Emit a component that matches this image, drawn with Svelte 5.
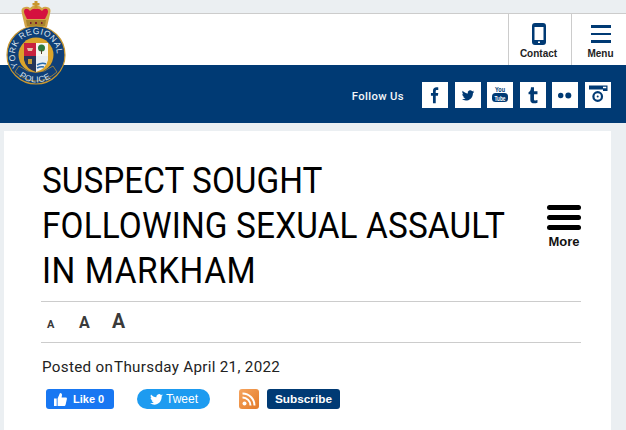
<script>
  const socials = ['f', 't', 'y', 'u', 'fl', 'i'];
</script>

<div class="page">
  <header class="top">
    <svg class="logo" width="72" height="88" viewBox="0 0 72 88" aria-label="York Regional Police">
      <defs>
        <path id="arcTop" d="M18.500 66.600 A21 21 0 1 1 53.500 66.600" />
        <path id="arcBottom" d="M18.500 76 A27 27 0 0 0 53.500 76" />
      </defs>
      <path d="M36 27 H25 L22 14 q-2-6 3-7 q3-1 5 1 q3-3 6-2 q3-1 6 2 q2-2 5-1 q5 1 3 7 L47 27z" fill="#d3a548" />
      <path d="M25 9 q3-1 5 2 q3-3 6-2 q3-1 6 2 q2-3 5-2 q2 2 0 6 l-2 4 H27 l-2-4 q-2-4 0-6z" fill="#d5103f" />
      <path d="M26 20 H46 L45 26 H27z" fill="#a8842c" />
      <path d="M30 22 h1.500 v2 h-1.500z M35 22 h2 v2 h-2z M41 22 h1.500 v2 h-1.500z" fill="#7a1f2c" />
      <path d="M34.500 1 h3 v2 h2 v2.500 h-2 v3 h-3 v-3 h-2 V3 h2z" fill="#c9962f" />
      <circle cx="36" cy="55" r="29" fill="#0f3f78" stroke="#c9972f" stroke-width="1.200" />
      <circle cx="36" cy="55" r="17.500" fill="#dba42b" />
      <text class="seal"><textPath href="#arcTop" startOffset="0">YORK REGIONAL</textPath></text>
      <path d="M15 72 Q36 90 57 72 L53 66 Q36 79 19 66z" fill="#0f3f78" stroke="#c9972f" stroke-width=".7" />
      <text class="seal"><textPath href="#arcBottom" startOffset="2%">POLICE</textPath></text>
      <path d="M24 43 H36 V56 H24z" fill="#c9223f" />
      <path d="M36 43 H48 V56 H36z" fill="#f6f6f2" />
      <path d="M24 56 H36 V72 Q26 69 24 60z" fill="#25365a" />
      <path d="M36 56 H48 V60 Q46 69 36 72z" fill="#e9eef3" />
      <path d="M37 65 q5-3 9-1 M37 68 q4-2 7-1" stroke="#2a6aa8" stroke-width="1.500" fill="none" />
      <circle cx="41.500" cy="48" r="3.500" fill="#2f7a3c" />
      <path d="M41 50 h1 v4 h-1z" fill="#54402a" />
      <path d="M27 48 h6 l-1 3 h-4z" fill="#e2c4a8" />
      <path d="M28 59 h4 v5 h-4z" fill="#c49b33" />
    </svg>
    <div class="spacer"></div>
    <div class="tool contact">
      <svg width="14" height="22" viewBox="0 0 14 22"><path fill-rule="evenodd" d="M3 0h8a3 3 0 0 1 3 3v16a3 3 0 0 1-3 3H3a3 3 0 0 1-3-3V3a3 3 0 0 1 3-3zM2.500 4v13h9V4zM6 18.500v1.500h2v-1.500z" fill="#003a74" /></svg>
      <span>Contact</span>
    </div>
    <div class="tool menu">
      <div class="burger"><i></i><i></i><i></i></div>
      <span>Menu</span>
    </div>
  </header>

  <div class="band">
    <span class="follow">Follow Us</span>
    <div class="socials">
      {#each socials as s}
        <div class="social">
          {#if s === 'f'}
            <svg width="26" height="26" viewBox="-3 -3 32 32"><path d="M10.500 23V14H8v-3.500h2.500V8c0-3 1.700-4.500 4.300-4.500 1 0 2 .1 2.200.2v3h-1.600c-1.300 0-1.500.7-1.500 1.600v2.200H17l-.4 3.500h-2.700v9z" fill="#003a74" /></svg>
          {:else if s === 't'}
            <svg width="26" height="26" viewBox="-8 -8 42 42"><path d="M23 7.500c-.8.400-1.500.5-2.400.6.900-.5 1.500-1.300 1.800-2.200-.8.500-1.700.8-2.600 1a4 4 0 0 0-7 3.700C9.300 10.400 6.300 8.800 4.300 6.300c-1 1.900-.5 4.200 1.300 5.400-.7 0-1.300-.2-1.900-.5 0 2 1.400 3.700 3.300 4.100-.6.200-1.200.2-1.800.1.500 1.600 2 2.800 3.800 2.800-1.800 1.400-4 2-6 1.800 6.500 4.100 17.800 1.500 18-10 .8-.6 1.500-1.300 2-2.500z" fill="#003a74" /></svg>
          {:else if s === 'y'}
            <svg width="26" height="26" viewBox="0 0 26 26"><text x="13" y="10" text-anchor="middle" class="you" textLength="10" lengthAdjust="spacingAndGlyphs">You</text><rect x="5" y="11" width="16" height="9" rx="3.500" fill="#003a74" /><text x="13" y="18.500" text-anchor="middle" class="tube" textLength="11" lengthAdjust="spacingAndGlyphs">Tube</text></svg>
          {:else if s === 'u'}
            <svg width="26" height="26" viewBox="-3 -3 32 32"><path d="M10.500 3.500h3.700v5h4.300v3.700h-4.300v6c0 1.700 1.500 1.900 4.300 1v3.300c-1.300.6-2.700.8-4 .8-3 0-4.800-1.500-4.800-4.300v-6.800H7.500V9.500c2-.6 2.900-3 3-6z" fill="#003a74" /></svg>
          {:else if s === 'fl'}
            <svg width="26" height="26" viewBox="0 0 26 26"><circle cx="8.700" cy="13.500" r="2.700" fill="#003a74" /><circle cx="16.300" cy="13.500" r="3" fill="#003a74" /></svg>
          {:else}
            <svg width="26" height="26" viewBox="0 0 26 26"><path fill-rule="evenodd" d="M4 3.500h18.500v5.500H18V7.500H4zM18 4.700v1.600h3.300V4.700z" fill="#003a74" /><circle cx="12.700" cy="14.500" r="4.300" fill="none" stroke="#003a74" stroke-width="2.200" /><circle cx="12.700" cy="14.500" r="1" fill="#003a74" /></svg>
          {/if}
        </div>
      {/each}
    </div>
  </div>

  <main class="card">
    <div class="titlerow">
      <h1>SUSPECT SOUGHT<br /><span class="l2">FOLLOWING SEXUAL ASSAULT</span><br /><span class="l3">IN MARKHAM</span></h1>
      <div class="more">
        <div class="fat"><i></i><i></i><i></i></div>
        <span>More</span>
      </div>
    </div>
    <div class="sizes">
      <span class="s1">A</span><span class="s2">A</span><span class="s3">A</span>
    </div>
    <p class="posted">Posted on<span>Thursday April 21, 2022</span></p>
    <div class="share">
      <div class="like">
        <svg width="13" height="13" viewBox="0 0 13 13"><path d="M0 5.500h2.700V13H0zM3.600 5.500 6 0c1.300 0 2 .9 2 2l-.4 2.500h4c1 0 1.500.8 1.300 1.600l-1.300 5.700c-.2.800-.8 1.200-1.500 1.200H3.600z" fill="#fff" /></svg>
        <span>Like 0</span>
      </div>
      <div class="tweet">
        <svg width="13" height="11" viewBox="0 0 26 22"><path d="M26 2.600c-1 .4-2 .7-3 .8 1.100-.7 1.900-1.700 2.300-2.900-1 .6-2.200 1-3.400 1.300a5.300 5.300 0 0 0-9 4.800C8.500 6.400 4.600 4.300 2 1.100.5 3.500 1.300 6.600 3.600 8.100c-.9 0-1.700-.3-2.400-.7 0 2.600 1.800 4.800 4.300 5.300-.8.200-1.600.2-2.400.1.700 2.100 2.600 3.600 4.900 3.700-2.200 1.700-5.100 2.500-8 2.100 11 7 23.800 0 23.400-14 1-.6 1.900-1.200 2.600-2z" fill="#fff" /></svg>
        <span>Tweet</span>
      </div>
      <div class="rss">
        <svg width="14" height="14" viewBox="0 0 14 14"><circle cx="2.500" cy="11.500" r="2" fill="#fff" /><path d="M.5 5.500a8 8 0 0 1 8 8M.5 1.500a12 12 0 0 1 12 12" fill="none" stroke="#fff" stroke-width="2" /></svg>
      </div>
      <div class="subscribe">Subscribe</div>
    </div>
  </main>
</div>

<style>
  :global(body) {
    margin: 0;
    background: #ebeff2;
    overflow: hidden;
  }
  .page {
    height: 430px;
    overflow: hidden;
    font-family: "Liberation Sans", Arial, sans-serif;
    padding-top: 13px;
    box-sizing: border-box;
    position: relative;
  }
  .top {
    height: 51px;
    background: #fff;
    border-top: 1px solid #ccc;
    display: flex;
  }
  .logo {
    position: absolute;
    left: 0;
    top: 0;
    z-index: 2;
  }
  .seal {
    font: 8.500px "Liberation Sans", Arial, sans-serif;
    fill: #dfe6ee;
    letter-spacing: .5px;
  }
  .spacer { flex: 1; }
  .tool {
    width: 63px;
    border-left: 1px solid #ccc;
    display: flex;
    flex-direction: column;
    align-items: center;
    padding-top: 9px;
    box-sizing: border-box;
    gap: 3px;
  }
  .contact { padding-right: 3px; }
  .menu { width: 55px; padding-left: 3px; }
  .tool span {
    font-size: 10px;
    font-weight: 700;
    color: #222;
    line-height: 11px;
  }
  .burger {
    width: 20px;
    height: 22px;
    display: flex;
    flex-direction: column;
    justify-content: space-between;
    padding: 2px 0 2.500px;
    box-sizing: border-box;
  }
  .burger i {
    height: 2.500px;
    background: #003a74;
  }
  .band {
    height: 58px;
    background: #003a74;
    box-sizing: border-box;
    display: flex;
    align-items: center;
    justify-content: flex-end;
    padding-right: 15px;
    padding-top: 2px;
  }
  .follow {
    color: #f2f5f8;
    font: 500 11.300px "Roboto", "Liberation Sans", sans-serif;
    letter-spacing: .35px;
    margin-right: 18px;
    padding-top: 3px;
  }
  .socials {
    display: flex;
    gap: 6.600px;
  }
  .social {
    width: 26px;
    height: 26px;
    background: #fff;
  }
  .social svg { display: block; }
  .you {
    font: 700 8px "Liberation Sans", sans-serif;
    fill: #003a74;
  }
  .tube {
    font: 700 7px "Liberation Sans", sans-serif;
    fill: #fff;
  }
  .card {
    margin: 8px 15px 0 4px;
    height: 299px;
    background: #fff;
    padding: 27px 30px 0 37px;
  }
  .titlerow {
    display: flex;
    align-items: center;
    justify-content: space-between;
    padding: 0 0 8px 1px;
    border-bottom: 1px solid #ccc;
  }
  h1 {
    margin: 0;
    font: 400 37.500px/45px "Roboto", "Liberation Sans", sans-serif;
    color: #000;
    transform: scaleX(.89);
    transform-origin: left;
    white-space: nowrap;
    width: 465px;
  }
  .l2 { letter-spacing: .15px; }
  .l3 { letter-spacing: .6px; }
  .more {
    display: flex;
    flex-direction: column;
    align-items: center;
    width: 34px;
    gap: 5.500px;
    margin-top: 3px;
  }
  .more span {
    font-size: 13px;
    font-weight: 700;
    color: #111;
    line-height: 14px;
  }
  .fat {
    display: flex;
    flex-direction: column;
    gap: 5px;
    width: 34px;
  }
  .fat i {
    height: 5px;
    border-radius: 3px;
    background: #000;
  }
  .sizes {
    height: 40px;
    display: flex;
    align-items: baseline;
    box-sizing: content-box;
    border-bottom: 1px solid #ccc;
    padding-left: 6px;
    color: #3a3a3a;
    font-family: "Roboto", "Liberation Sans", sans-serif;
    font-weight: 700;
    line-height: 40px;
  }
  .s1 { font-size: 11px; width: 32px; }
  .s2 { font-size: 16px; width: 33px; }
  .s3 { font-size: 19.500px; }
  .posted {
    margin: 15px 0 0 1px;
    font: 400 15.200px/18px "Roboto", "Liberation Sans", sans-serif;
    letter-spacing: .3px;
    color: #222;
  }
  .posted span { margin-left: 1px; }
  .share {
    margin-top: 13px;
    padding-left: 5px;
    display: flex;
    align-items: center;
    height: 20px;
  }
  .like {
    width: 68px;
    height: 20px;
    border-radius: 3px;
    background: #1877f2;
    color: #fff;
    display: flex;
    align-items: center;
    box-sizing: border-box;
    padding-left: 8px;
    gap: 6px;
    font-size: 11px;
    font-weight: 700;
  }
  .tweet {
    width: 73px;
    height: 20px;
    border-radius: 10px;
    background: #1d9bf0;
    color: #fff;
    display: flex;
    align-items: center;
    margin-left: 23px;
    box-sizing: border-box;
    padding-left: 13px;
    gap: 3px;
    font-size: 12px;
  }
  .rss {
    width: 20px;
    height: 20px;
    border-radius: 3px;
    background: linear-gradient(135deg, #f6a560, #e37a28);
    margin-left: 29px;
    display: flex;
    align-items: center;
    justify-content: center;
  }
  .subscribe {
    width: 73px;
    height: 20px;
    line-height: 20px;
    text-align: center;
    border-radius: 3px;
    background: #003a74;
    color: #fff;
    font-size: 11.800px;
    font-weight: 700;
    margin-left: 8px;
  }
</style>
